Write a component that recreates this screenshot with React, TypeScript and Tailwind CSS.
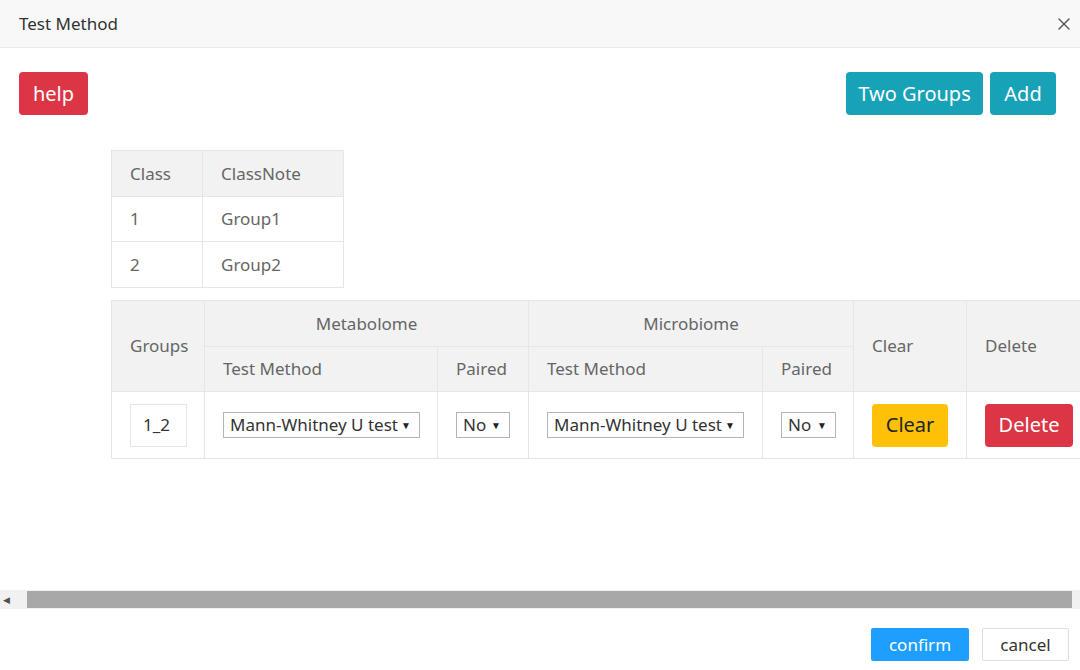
import { X } from "lucide-react";

function FakeSelect({ label, width }: { label: string; width: string }) {
  return (
    <span
      className={`inline-flex h-[26px] items-center justify-between border border-[#b5b5b5] bg-white pl-[6px] pr-[8px] text-[17px] text-[#333] ${width}`}
    >
      <span>{label}</span>
      <span className="text-[10px] text-[#222]">▼</span>
    </span>
  );
}

export default function App() {
  const base = "border border-[#e6e6e6] px-[18px] font-normal";
  const cell = `${base} text-left`;
  const center = `${base} text-center`;

  return (
    <div
      className="flex h-[670px] w-[1080px] flex-col overflow-hidden bg-white text-[#666]"
      style={{ fontFamily: '"Noto Sans", "Open Sans", sans-serif' }}
    >
      <div className="flex h-[48px] shrink-0 items-center justify-between border-b border-[#eaeaea] bg-[#f8f8f8] pl-[19px] pr-[6px]">
        <span className="text-[17px] text-[#333]">Test Method</span>
        <X size={20} strokeWidth={1.6} className="text-[#555]" />
      </div>

      <div className="flex-1 overflow-hidden">
        <div className="flex items-center justify-between px-[19px] pb-[35px] pt-[24px]">
          <button className="h-[43px] w-[69px] rounded-[4px] bg-[#dc3545] text-[20px] text-white">
            help
          </button>
          <div className="flex gap-[7px] pr-[5px]">
            <button className="h-[43px] w-[137px] rounded-[4px] bg-[#17a2b8] text-[20px] text-white">
              Two Groups
            </button>
            <button className="h-[43px] w-[66px] rounded-[4px] bg-[#17a2b8] text-[20px] text-white">
              Add
            </button>
          </div>
        </div>

        <div className="pl-[111px]">
          <table className="border-collapse text-[17px]">
            <thead>
              <tr className="h-[46px] bg-[#f2f2f2]">
                <th className={`${cell} w-[91px]`}>Class</th>
                <th className={`${cell} w-[141px]`}>ClassNote</th>
              </tr>
            </thead>
            <tbody>
              <tr className="h-[45px]">
                <td className={cell}>1</td>
                <td className={cell}>Group1</td>
              </tr>
              <tr className="h-[46px]">
                <td className={cell}>2</td>
                <td className={cell}>Group2</td>
              </tr>
            </tbody>
          </table>

          <table className="mt-[12px] w-[990px] min-w-[990px] table-fixed border-collapse text-[17px]">
            <colgroup>
              <col className="w-[93px]" />
              <col className="w-[233px]" />
              <col className="w-[91px]" />
              <col className="w-[234px]" />
              <col className="w-[91px]" />
              <col className="w-[113px]" />
              <col className="w-[135px]" />
            </colgroup>
            <thead className="bg-[#f2f2f2]">
              <tr className="h-[46px]">
                <th rowSpan={2} className={center}>
                  Groups
                </th>
                <th colSpan={2} className={center}>
                  Metabolome
                </th>
                <th colSpan={2} className={center}>
                  Microbiome
                </th>
                <th rowSpan={2} className={cell}>
                  Clear
                </th>
                <th rowSpan={2} className={cell}>
                  Delete
                </th>
              </tr>
              <tr className="h-[45px]">
                <th className={cell}>Test Method</th>
                <th className={cell}>Paired</th>
                <th className={cell}>Test Method</th>
                <th className={cell}>Paired</th>
              </tr>
            </thead>
            <tbody>
              <tr className="h-[67px]">
                <td className={cell}>
                  <span className="flex h-[43px] w-[57px] items-center border border-[#e6e6e6] pl-[12px] text-[#333]">
                    1_2
                  </span>
                </td>
                <td className={cell}>
                  <FakeSelect label="Mann-Whitney U test" width="w-[197px]" />
                </td>
                <td className={cell}>
                  <FakeSelect label="No" width="w-[54px]" />
                </td>
                <td className={cell}>
                  <FakeSelect label="Mann-Whitney U test" width="w-[197px]" />
                </td>
                <td className={cell}>
                  <FakeSelect label="No" width="w-[55px]" />
                </td>
                <td className={cell}>
                  <button className="h-[43px] w-[76px] rounded-[4px] bg-[#ffc107] text-[20px] text-[#212529]">
                    Clear
                  </button>
                </td>
                <td className={cell}>
                  <button className="h-[43px] w-[88px] rounded-[4px] bg-[#dc3545] text-[20px] text-white">
                    Delete
                  </button>
                </td>
              </tr>
            </tbody>
          </table>
        </div>
      </div>

      <div className="flex h-[19px] shrink-0 items-center bg-[#f1f1f1]">
        <span className="flex w-[27px] justify-center pr-[14px] text-[9px] text-[#505050]">◀</span>
        <div className="h-[17px] w-[1045px] bg-[#a8a8a8]" />
      </div>

      <div className="flex h-[61px] shrink-0 items-start justify-end gap-[13px] pr-[11px] pt-[19px]">
        <button className="h-[33px] w-[98px] rounded-[2px] bg-[#1e9fff] text-[17px] text-white">
          confirm
        </button>
        <button className="h-[33px] w-[87px] rounded-[2px] border border-[#dedede] bg-white text-[17px] text-[#333]">
          cancel
        </button>
      </div>
    </div>
  );
}
